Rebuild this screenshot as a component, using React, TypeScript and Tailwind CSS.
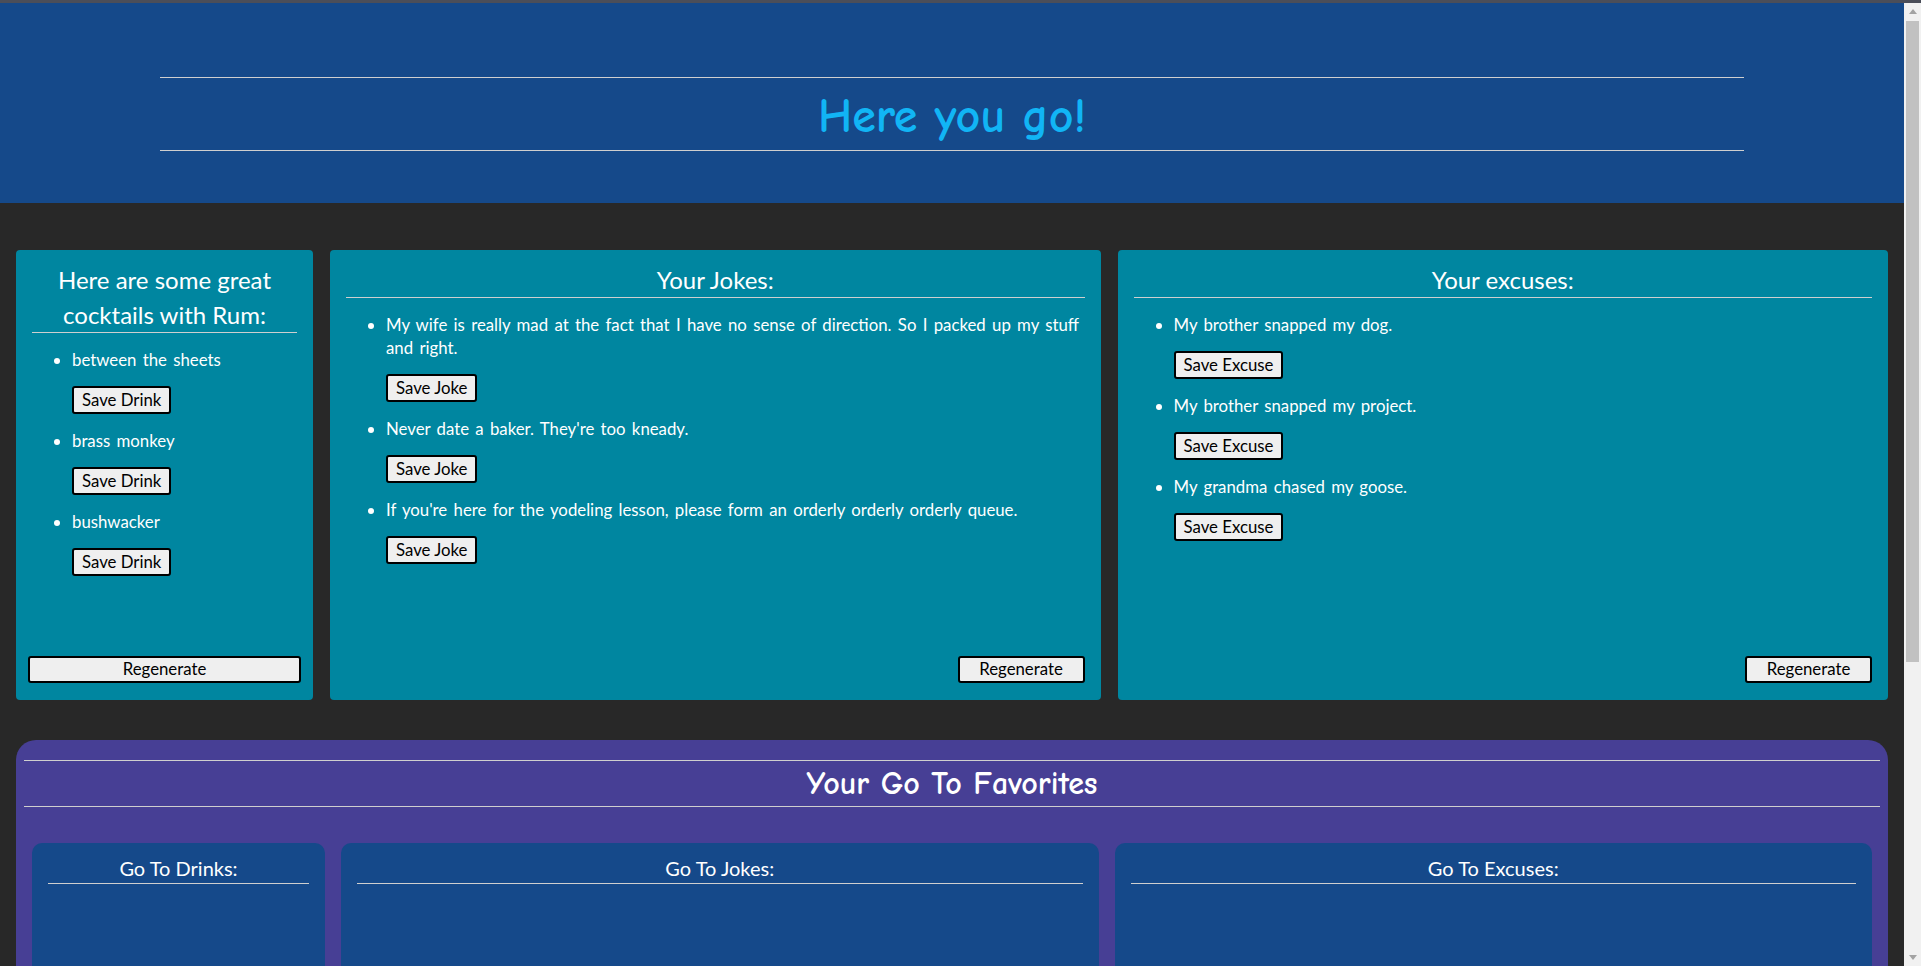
import React from "react";

const body = { fontFamily: '"Segoe UI", Lato, "Noto Sans", sans-serif' };
const comic = { fontFamily: '"Comic Sans MS", "Comic Neue", Lato, sans-serif' };

function SaveBtn({ label }: { label: string }) {
  return (
    <button className="mt-[15px] block h-[28px] px-2 border-2 border-black rounded-[3px] bg-[#efefef] text-black text-[16.8px] leading-none [word-spacing:0px]">
      {label}
    </button>
  );
}

function Card({
  title,
  items,
  btn,
  regen,
  className,
}: {
  title: string;
  items: string[];
  btn: string;
  regen: string;
  className: string;
}) {
  return (
    <div className={`rounded-[4px] bg-[#0086a0] flex flex-col px-4 pt-3 pb-[17px] text-white ${className}`}>
      <h2 className="text-[24px] leading-[35px] text-center border-b border-[#cfcfcf] font-normal">{title}</h2>
      <ul className="mt-[15px] pl-10 list-disc flex flex-col gap-[15px] text-[16.8px] leading-[23px] [word-spacing:2px]">
        {items.map((it) => (
          <li key={it}>
            {it}
            <SaveBtn label={btn} />
          </li>
        ))}
      </ul>
      <button
        className={`mt-auto h-[27px] border-2 border-black rounded-[3px] bg-[#efefef] text-black text-[16.8px] leading-none shrink-0 ${regen}`}
      >
        Regenerate
      </button>
    </div>
  );
}

function FavCard({ title, className }: { title: string; className: string }) {
  return (
    <div className={`rounded-[10px] bg-[#15498a] h-[300px] pt-[10px] px-4 ${className}`}>
      <h3 className="text-[20px] leading-[30px] text-center border-b border-[#cfcfcf] text-white font-normal">{title}</h3>
    </div>
  );
}

export default function App() {
  return (
    <div className="w-[1921px] h-[966px] overflow-hidden flex flex-col bg-[#282828]" style={body}>
      <div className="h-[3px] bg-[#4b4e59] shrink-0" />
      <div className="flex flex-1 min-h-0">
        <div className="w-[1904px] flex flex-col overflow-hidden">
          <header className="h-[200px] shrink-0 bg-[#15498a] flex flex-col items-center pt-[74px]">
            <div className="w-[1584px] border-t border-[#cfcfcf]" />
            <div className="w-[1584px] h-[72px] flex items-center justify-center">
              <h1
                className="leading-[72px] mt-[6px] text-center text-[48px] text-[#11b5f5] font-bold"
                style={comic}
              >
                Here you go!
              </h1>
            </div>
            <div className="w-[1584px] border-t border-[#cfcfcf]" />
          </header>

          <div className="mt-[47px] px-4 flex gap-[17px] h-[450px] shrink-0">
            <Card
              className="w-[297px] shrink-0"
              title="Here are some great cocktails with Rum:"
              items={["between the sheets", "brass monkey", "bushwacker"]}
              btn="Save Drink"
              regen="w-[273px] self-center"
            />
            <Card
              className="flex-1"
              title="Your Jokes:"
              items={[
                "My wife is really mad at the fact that I have no sense of direction. So I packed up my stuff and right.",
                "Never date a baker. They're too kneady.",
                "If you're here for the yodeling lesson, please form an orderly orderly orderly queue.",
              ]}
              btn="Save Joke"
              regen="w-[127px] self-end"
            />
            <Card
              className="flex-1"
              title="Your excuses:"
              items={["My brother snapped my dog.", "My brother snapped my project.", "My grandma chased my goose."]}
              btn="Save Excuse"
              regen="w-[127px] self-end"
            />
          </div>

          <section className="mt-[40px] mx-4 rounded-t-[20px] bg-[#473f95] pt-5 flex flex-col flex-1">
            <div className="mx-2 border-t border-[#cfcfcf]" />
            <h2 className="h-[45px] leading-[45px] text-center text-[32px] text-white font-bold" style={comic}>
              Your Go To Favorites
            </h2>
            <div className="mx-2 border-t border-[#cfcfcf]" />
            <div className="mt-[36px] px-4 flex gap-4">
              <FavCard title="Go To Drinks:" className="w-[293px] shrink-0" />
              <FavCard title="Go To Jokes:" className="flex-1" />
              <FavCard title="Go To Excuses:" className="flex-1" />
            </div>
          </section>
        </div>

        <div className="w-[17px] bg-[#f1f1f1] flex flex-col items-center">
          <div className="h-[17px] w-full flex items-center justify-center">
            <svg width="8" height="5" viewBox="0 0 8 5">
              <polygon points="4,0 8,5 0,5" fill="#a3a3a3" />
            </svg>
          </div>
          <div className="mt-[1px] w-[13px] h-[641px] bg-[#c1c1c1]" />
          <div className="mt-auto h-[17px] w-full flex items-center justify-center">
            <svg width="8" height="5" viewBox="0 0 8 5">
              <polygon points="0,0 8,0 4,5" fill="#a3a3a3" />
            </svg>
          </div>
        </div>
      </div>
    </div>
  );
}
